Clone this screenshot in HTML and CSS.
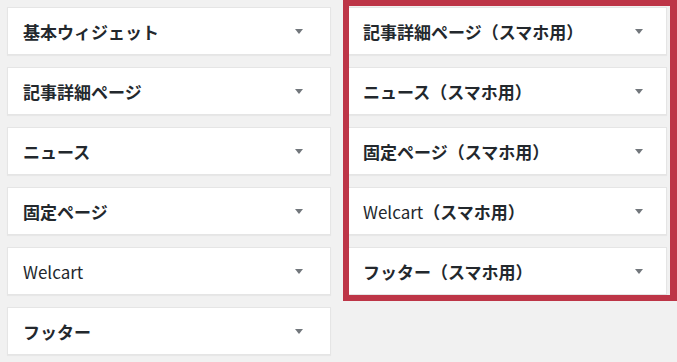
FILE: index.html
```html
<!DOCTYPE html>
<html lang="ja">
<head>
    <meta charset="utf-8">
    <title>ウィジェット</title>
    <link rel="stylesheet" href="styles.css">
</head>
<body>
    <div class="areas">
        <div class="col col-left">
            <div class="widget"><span class="title">基本ウィジェット</span><span class="arrow"></span></div>
            <div class="widget"><span class="title">記事詳細ページ</span><span class="arrow"></span></div>
            <div class="widget"><span class="title">ニュース</span><span class="arrow"></span></div>
            <div class="widget"><span class="title">固定ページ</span><span class="arrow"></span></div>
            <div class="widget"><span class="title"><span class="latin">Welcart</span></span><span class="arrow"></span></div>
            <div class="widget"><span class="title">フッター</span><span class="arrow"></span></div>
        </div>
        <div class="col col-right">
            <div class="widget"><span class="title">記事詳細ページ（スマホ用）</span><span class="arrow"></span></div>
            <div class="widget"><span class="title">ニュース（スマホ用）</span><span class="arrow"></span></div>
            <div class="widget"><span class="title">固定ページ（スマホ用）</span><span class="arrow"></span></div>
            <div class="widget"><span class="title"><span class="latin">Welcart</span>（スマホ用）</span><span class="arrow"></span></div>
            <div class="widget"><span class="title">フッター（スマホ用）</span><span class="arrow"></span></div>
        </div>
    </div>
    <!-- annotation frame -->
    <div class="highlight"></div>
</body>
</html>
```

FILE: styles.css
```css
body {
    margin: 0;
    padding: 7px;
    background-color: #f1f1f1;
    color: #23282d;
    font-family: 'Noto Sans CJK JP', 'Noto Sans', sans-serif;
    font-size: 17px;
}

.areas {
    display: flex;
    gap: 16px;
    align-items: flex-start;
}

.col {
    display: flex;
    flex-direction: column;
    gap: 12px;
}

.col-left {
    width: 324px;
}

.col-right {
    width: 320px;
}

.widget {
    box-sizing: border-box;
    height: 48px;
    display: flex;
    align-items: center;
    justify-content: space-between;
    padding: 0 27px 0 15px;
    background-color: #fff;
    border: 1px solid #e5e5e5;
    box-shadow: 0 1px 1px rgba(0,0,0,0.04);
}

.col-right .widget {
    padding-right: 23px;
}

.title {
    font-weight: 700;
    line-height: 1;
}

.latin {
    font-weight: 400;
}

.arrow {
    width: 0;
    height: 0;
    border-left: 4px solid transparent;
    border-right: 4px solid transparent;
    border-top: 5px solid #72777c;
}

.highlight {
    position: absolute;
    top: 0;
    left: 343px;
    right: 0;
    height: 301px;
    box-sizing: border-box;
    border: 6px solid #bd3547;
    border-right-width: 7px;
}
```
